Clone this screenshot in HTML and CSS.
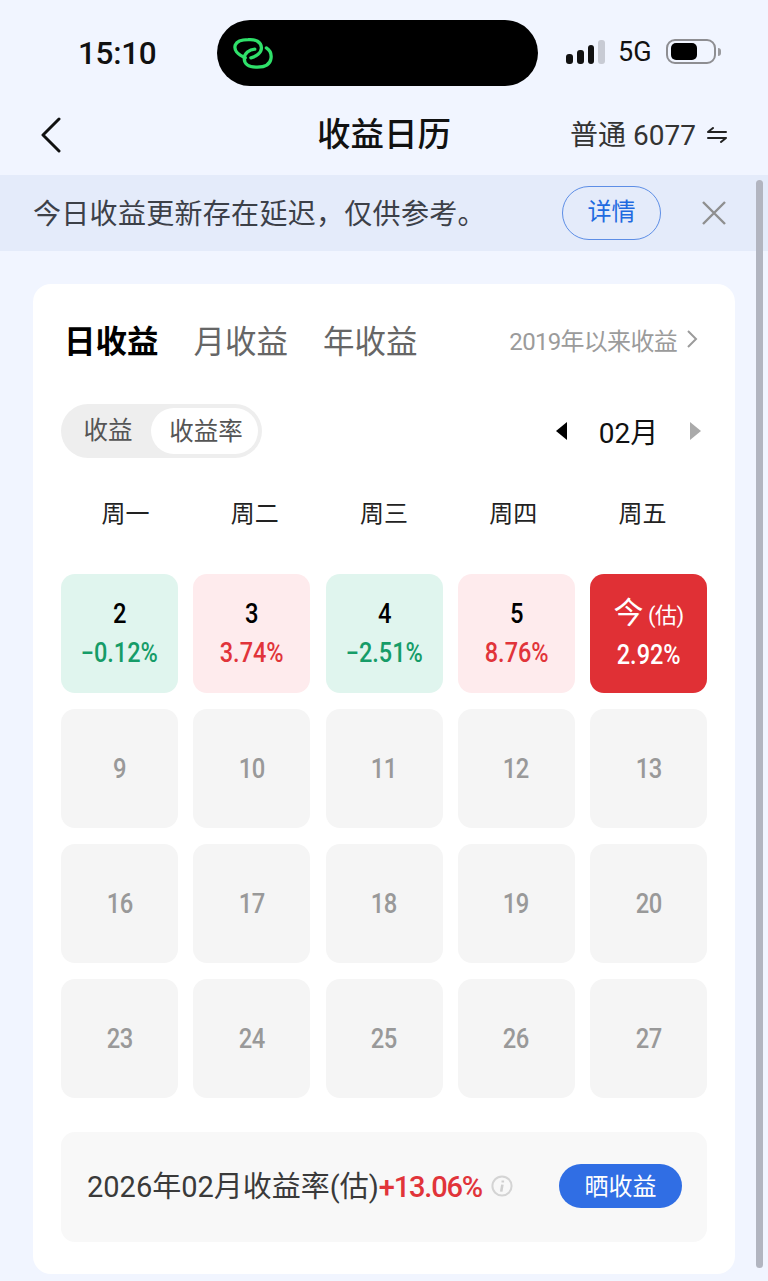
FILE: index.html
```html
<!DOCTYPE html>
<html lang="zh-CN">
<head>
    <meta charset="UTF-8">
    <meta name="viewport" content="width=device-width, initial-scale=1.0">
    <title>收益日历</title>
    <link rel="stylesheet" href="styles.css">
</head>
<body>
    <div class="page">
        <div class="status-bar">
            <div class="time">15:10</div>
            <div class="island">
                <svg class="island-logo" width="43" height="33" viewBox="90 80 130 100" fill="none" stroke="#2fe06a" stroke-width="10" stroke-linecap="round" stroke-linejoin="round">
                    <path d="M133 143 C108 133 98 118 103 104 C108 92 125 88 142 88 C165 86 181 95 182 112 C183 128 165 140 150 143"/>
                    <path d="M197 113 C208 120 213 132 211 145 C208 165 190 172 165 171 C142 171 130 160 130 145 C130 130 145 118 162 117"/>
                </svg>
            </div>
            <div class="status-icons">
                <div class="signal">
                    <span class="bar bar-1"></span>
                    <span class="bar bar-2"></span>
                    <span class="bar bar-3"></span>
                    <span class="bar bar-4"></span>
                </div>
                <span class="net">5G</span>
                <div class="battery"><span class="battery-fill"></span></div>
                <span class="battery-cap"></span>
            </div>
        </div>

        <div class="nav">
            <svg class="back" width="20" height="36" viewBox="0 0 20 36" fill="none" stroke="#111" stroke-width="3" stroke-linecap="round" stroke-linejoin="round">
                <path d="M18 2 L2 18 L18 34"/>
            </svg>
            <h1>收益日历</h1>
            <div class="account">
                <span class="account-name">普通 6077</span>
                <svg width="20" height="16" viewBox="0 0 20 16" fill="none" stroke="#222" stroke-width="2" stroke-linecap="round" stroke-linejoin="round">
                    <path d="M1 5 H19 M1 5 L6 1"/>
                    <path d="M19 11 H1 M19 11 L14 15"/>
                </svg>
            </div>
        </div>

        <div class="notice">
            <p>今日收益更新存在延迟，仅供参考。</p>
            <button class="detail-btn">详情</button>
            <svg class="close" width="26" height="26" viewBox="0 0 26 26" fill="none" stroke="#8f8f8f" stroke-width="2.4">
                <path d="M2 2 L24 24 M24 2 L2 24"/>
            </svg>
        </div>

        <div class="card">
            <div class="tabs">
                <span class="tab active">日收益</span>
                <span class="tab">月收益</span>
                <span class="tab">年收益</span>
                <span class="since">2019年以来收益
                    <svg width="11" height="20" viewBox="0 0 11 20" fill="none" stroke="#9b9b9b" stroke-width="2">
                        <path d="M1 2 L9 10 L1 18"/>
                    </svg>
                </span>
            </div>

            <div class="controls">
                <div class="switch">
                    <span class="switch-item">收益</span>
                    <span class="switch-item on">收益率</span>
                </div>
                <div class="month">
                    <span class="arrow arrow-left"></span>
                    <span class="month-label">02月</span>
                    <span class="arrow arrow-right"></span>
                </div>
            </div>

            <div class="weekdays">
                <span>周一</span>
                <span>周二</span>
                <span>周三</span>
                <span>周四</span>
                <span>周五</span>
            </div>

            <div class="days">
                <div class="day down"><b>2</b><i>−0.12%</i></div>
                <div class="day up"><b>3</b><i>3.74%</i></div>
                <div class="day down"><b>4</b><i>−2.51%</i></div>
                <div class="day up"><b>5</b><i>8.76%</i></div>
                <div class="day today"><b>今<small>(估)</small></b><i>2.92%</i></div>
                <div class="day"><b>9</b></div>
                <div class="day"><b>10</b></div>
                <div class="day"><b>11</b></div>
                <div class="day"><b>12</b></div>
                <div class="day"><b>13</b></div>
                <div class="day"><b>16</b></div>
                <div class="day"><b>17</b></div>
                <div class="day"><b>18</b></div>
                <div class="day"><b>19</b></div>
                <div class="day"><b>20</b></div>
                <div class="day"><b>23</b></div>
                <div class="day"><b>24</b></div>
                <div class="day"><b>25</b></div>
                <div class="day"><b>26</b></div>
                <div class="day"><b>27</b></div>
            </div>

            <div class="summary">
                <span class="summary-text">2026年02月收益率(估)<em>+13.06%</em></span>
                <svg class="info" width="22" height="22" viewBox="0 0 22 22" fill="none">
                    <circle cx="11" cy="11" r="9.6" stroke="#d4d4d4" stroke-width="2"/>
                    <path d="M11.8 5.4 V7.6 M11.4 9.6 L10.2 16.6" stroke="#cfcfcf" stroke-width="2.6"/>
                </svg>
                <button class="share-btn">晒收益</button>
            </div>
        </div>

        <div class="scrollbar"></div>
    </div>
</body>
</html>
```

FILE: styles.css
```css
* {
    margin: 0;
    padding: 0;
    box-sizing: border-box;
    font-family: 'Roboto', 'Noto Sans CJK SC', sans-serif;
}

body {
    background: #f1f5ff;
    overflow: hidden;
}

.page {
    position: relative;
    width: 768px;
    height: 1281px;
    overflow: hidden;
    background: #f1f5ff;
}

/* status bar */
.status-bar {
    height: 100px;
    padding-top: 20px;
    display: flex;
    align-items: flex-start;
}

.time {
    width: 217px;
    padding: 15px 0 0 78px;
    font-size: 31.5px;
    line-height: 38px;
    font-weight: 500;
    color: #111;
    letter-spacing: -0.3px;
}

.island {
    width: 321px;
    height: 66px;
    border-radius: 33px;
    background: #000;
    padding: 17px 0 0 14px;
}

.island-logo {
    display: block;
}

.status-icons {
    display: flex;
    align-items: center;
    margin: 19px 0 0 28px;
    height: 25px;
}

.signal {
    display: flex;
    align-items: flex-end;
    gap: 4px;
    height: 24px;
    width: 39px;
}

.bar {
    width: 7px;
    border-radius: 3px;
    background: #111;
}

.bar-1 { height: 10px; }
.bar-2 { height: 14px; }
.bar-3 { height: 19px; }
.bar-4 { height: 24px; background: #c8cbd4; }

.net {
    margin-left: 13px;
    font-size: 27px;
    line-height: 26px;
    color: #111;
}

.battery {
    margin-left: 14px;
    width: 50px;
    height: 25px;
    border: 2px solid #8e8e92;
    border-radius: 9px;
    padding: 2px 3px;
}

.battery-fill {
    display: block;
    width: 26px;
    height: 17px;
    border-radius: 5px;
    background: #000;
}

.battery-cap {
    width: 3px;
    height: 8px;
    margin-left: 2px;
    border-radius: 0 3px 3px 0;
    background: #9a9a9e;
}

/* nav */
.nav {
    position: relative;
    height: 75px;
    display: flex;
    align-items: center;
    justify-content: space-between;
    padding: 0 41px 6px 41px;
}

.back {
    display: block;
}

.nav h1 {
    position: absolute;
    left: 0;
    right: 0;
    top: 12px;
    text-align: center;
    font-size: 33.5px;
    line-height: 46px;
    font-weight: 500;
    color: #111;
}

.account {
    display: flex;
    align-items: center;
    gap: 11px;
    font-size: 28px;
    color: #333;
}

.account-name {
    padding-bottom: 4px;
}

/* notice */
.notice {
    height: 76px;
    padding: 0 41px 0 33px;
    background: #e4ebfa;
    display: flex;
    align-items: center;
}

.notice p {
    flex: 1;
    font-size: 28px;
    letter-spacing: 0.3px;
    line-height: 38px;
    padding-top: 4px;
    color: #3c4048;
}

.detail-btn {
    width: 99px;
    height: 54px;
    margin-right: 40px;
    padding-bottom: 7px;
    border: 1px solid #5d8ee6;
    border-radius: 27px;
    background: transparent;
    font-size: 24px;
    color: #1f6ae0;
}

/* card */
.card {
    width: 702px;
    height: 990px;
    margin: 33px 0 0 33px;
    padding: 0 28px;
    border-radius: 18px;
    background: #fff;
}

.tabs {
    height: 120px;
    padding: 0 9px 10px 3px;
    display: flex;
    align-items: center;
}

.tab {
    font-size: 31.5px;
    color: #666;
    margin-right: 35px;
}

.tab.active {
    color: #000;
    font-weight: 700;
}

.since {
    margin-left: auto;
    display: flex;
    align-items: center;
    gap: 10px;
    font-size: 24px;
    letter-spacing: -0.7px;
    color: #9b9b9b;
}

.controls {
    height: 54px;
    display: flex;
    align-items: center;
    justify-content: space-between;
}

.switch {
    width: 201px;
    height: 54px;
    padding: 4px 4px;
    border-radius: 27px;
    background: #eeeeee;
    display: flex;
    align-items: center;
}

.switch-item {
    flex: 1;
    text-align: center;
    font-size: 24.5px;
    line-height: 46px;
    color: #555;
}

.switch-item.on {
    flex: none;
    width: 107px;
    height: 46px;
    padding-left: 3px;
    line-height: 48px;
    border-radius: 23px;
    background: #fff;
}

.month {
    display: flex;
    align-items: center;
    padding-right: 6px;
}

.month-label {
    width: 123px;
    text-align: center;
    font-size: 28px;
    color: #111;
}

.arrow {
    width: 0;
    height: 0;
    border-top: 9px solid transparent;
    border-bottom: 9px solid transparent;
}

.arrow-left {
    border-right: 11px solid #000;
}

.arrow-right {
    border-left: 11px solid #aaa;
}

.weekdays {
    height: 60px;
    margin-top: 26px;
    display: grid;
    grid-template-columns: repeat(5, 1fr);
    text-align: center;
    font-size: 24px;
    line-height: 60px;
    color: #222;
}

.days {
    margin-top: 30px;
    display: grid;
    grid-template-columns: repeat(5, 117px);
    grid-auto-rows: 119px;
    column-gap: 15.25px;
    row-gap: 16px;
}

.day {
    border-radius: 14px;
    background: #f5f5f5;
    display: flex;
    flex-direction: column;
    align-items: center;
    justify-content: center;
    gap: 3px;
    color: #999;
}

.day b {
    font-size: 27px;
    line-height: 36px;
    font-weight: 500;
    letter-spacing: -0.5px;
    transform: scaleX(0.88);
}

.day i {
    font-style: normal;
    font-size: 27px;
    line-height: 36px;
    font-weight: 500;
    transform: scaleX(0.87);
}

.day small {
    font-size: 22px;
    font-weight: 400;
    margin-left: 5px;
}

.day.down {
    background: #e0f5ee;
}

.day.up {
    background: #feebed;
}

.day.down b,
.day.up b {
    color: #000;
}

.day.down i {
    color: #169c68;
}

.day.up i {
    color: #e1343a;
}

.day.today {
    background: #e03035;
}

.day.today b {
    color: #fff;
    font-size: 30px;
    font-weight: 400;
    transform: none;
}

.day.today i {
    color: #fff;
}

.summary {
    height: 110px;
    margin-top: 34px;
    padding: 0 25px 2px 26px;
    border-radius: 14px;
    background: #f8f8f8;
    display: flex;
    align-items: center;
}

.summary-text {
    padding-bottom: 4px;
    font-size: 29px;
    color: #3a3a3a;
}

.summary-text em {
    font-style: normal;
    font-weight: 500;
    letter-spacing: -1.2px;
    color: #e1343a;
}

.info {
    margin-left: 9px;
}

.share-btn {
    margin-left: auto;
    width: 123px;
    height: 44px;
    padding-bottom: 4px;
    border: none;
    border-radius: 23px;
    background: #306ee4;
    font-size: 24px;
    color: #fff;
}

/* overlay scroll indicator */
.scrollbar {
    position: absolute;
    left: 756px;
    top: 180px;
    width: 7px;
    height: 1088px;
    border-radius: 4px;
    background: #b2b5c0;
}
```
